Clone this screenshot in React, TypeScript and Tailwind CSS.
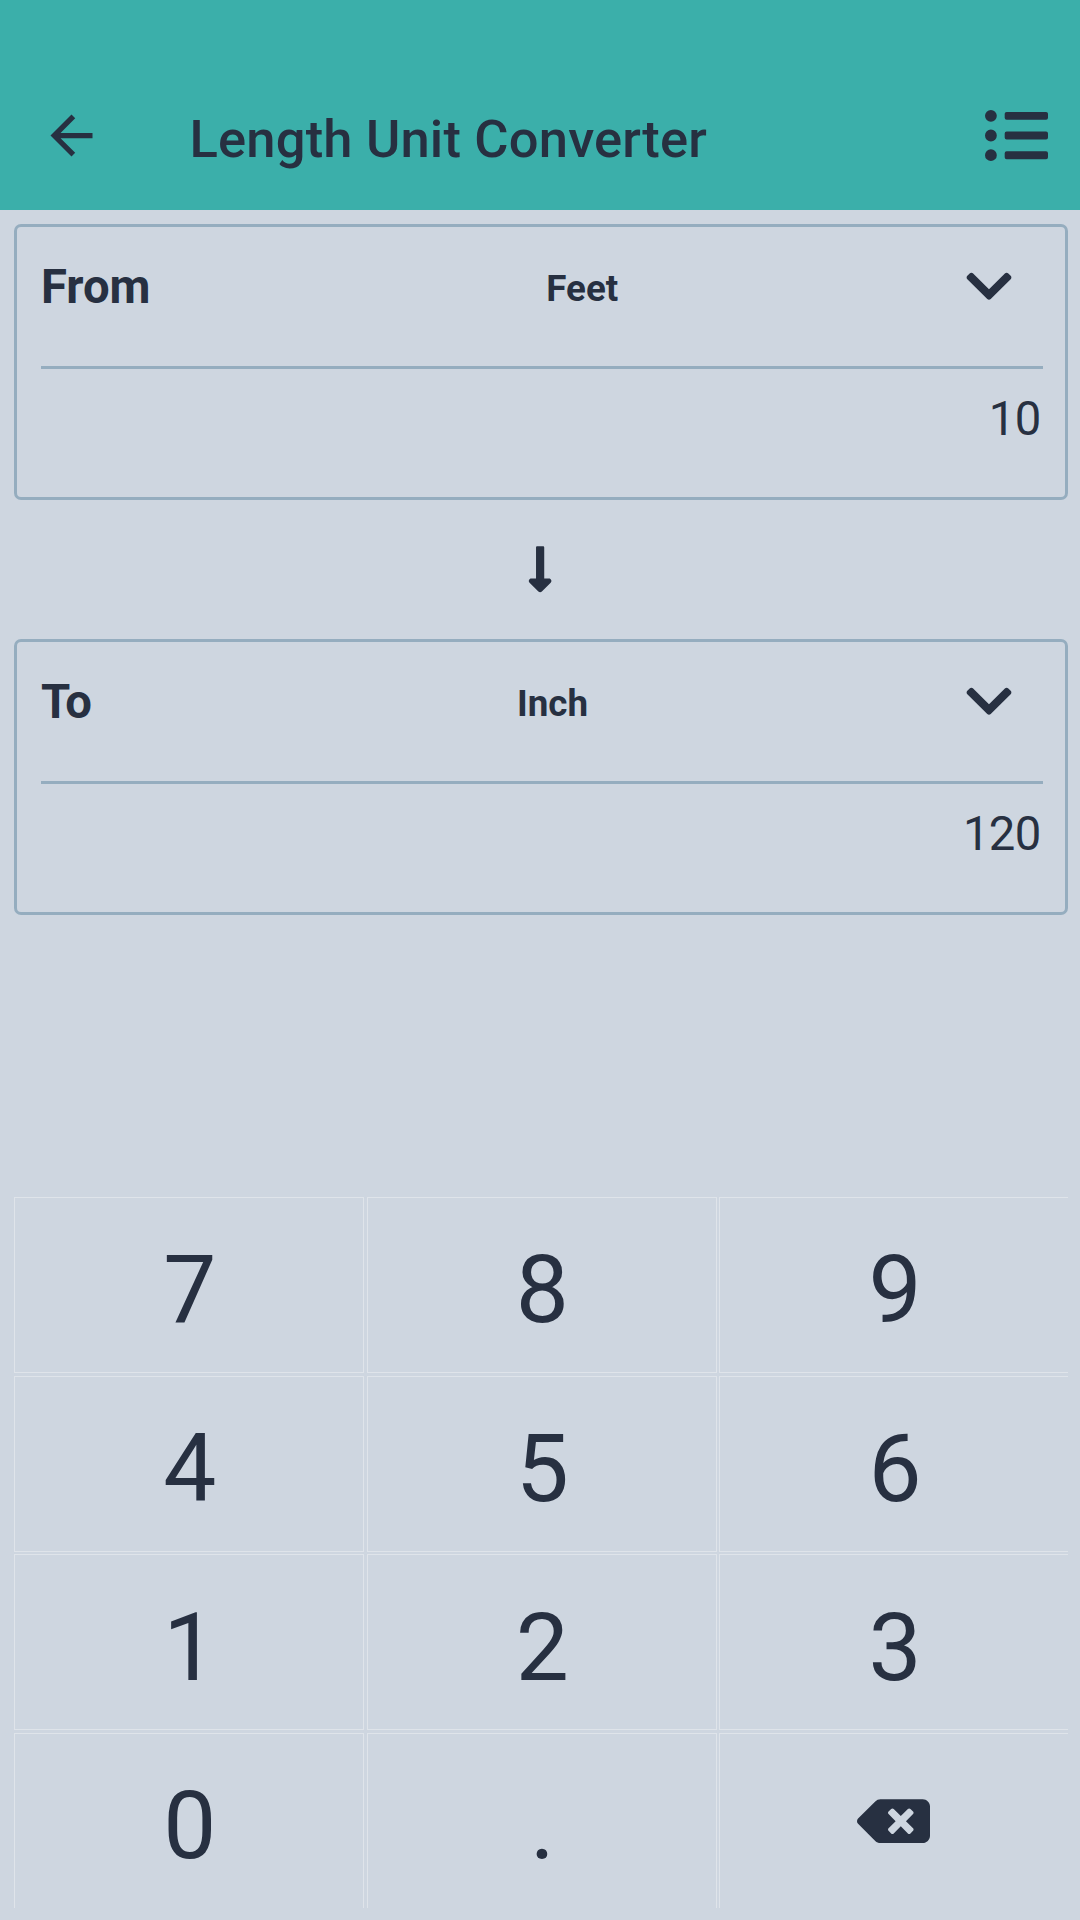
import React from "react";
import { FaBackspace, FaChevronDown, FaListUl, FaLongArrowAltDown } from "react-icons/fa";
import { MdArrowBack } from "react-icons/md";

function UnitCard({ label, unit, value, labelClass }: { label: string; unit: string; value: string; labelClass: string }) {
  return (
    <section className="mr-3 ml-3.5 h-[276px] rounded-[7px] border-3 border-[#95adbf] pr-[22px] pl-6">
      <div className="flex h-[139px] items-center pb-[20px]">
        <span className={labelClass}>{label}</span>
        <span className="flex-1 pt-[5px] pl-[72px] text-center text-[36.75px] leading-[44px] font-bold">{unit}</span>
        <button className="mr-[31px] ml-[24px] flex" aria-label="Choose unit">
          <FaChevronDown className="h-[52.5px] w-[46px]" />
        </button>
      </div>
      <div className="h-[3px] bg-[#95adbf]" />
      <div className="pt-[22px] pr-[2.5px] text-right text-[47.25px] leading-[56px] tracking-[-0.7px]">{value}</div>
    </section>
  );
}

const KEYS = ["7", "8", "9", "4", "5", "6", "1", "2", "3", "0", ".", "back"];

export default function App() {
  return (
    <main className="flex h-[1920px] w-[1080px] flex-col overflow-hidden bg-[#ced6e0] font-['Roboto',sans-serif] text-[#273041]">
      <header className="flex h-[210px] items-center bg-[#3bafaa] pt-[60px] pr-8 pl-[39.5px]">
        <MdArrowBack className="h-[63px] w-[63px]" />
        <h1 className="ml-[87px] flex-1 pt-[7px] text-[52.5px] leading-[62px] font-medium tracking-[0.18px] whitespace-nowrap">
          Length Unit Converter
        </h1>
        <FaListUl className="h-[63px] w-[63px]" />
      </header>
      <div className="h-3.5" />
      <UnitCard label="From" unit="Feet" value="10" labelClass="text-[47.25px] leading-[56px] font-bold" />
      <div className="flex h-[139px] items-center justify-center">
        <FaLongArrowAltDown className="h-[52.5px] w-[26.25px]" />
      </div>
      <UnitCard
        label="To"
        unit="Inch"
        value="120"
        labelClass="text-[47.25px] leading-[56px] font-bold tracking-[-1px]"
      />
      <div className="mt-auto mr-3 mb-3 ml-3.5 h-[711px] overflow-hidden">
        <div className="grid w-[1056px] grid-cols-[350px_350px_350px] grid-rows-[176px_176px_176px_176px] gap-x-[2.6px] gap-y-[2.66px]">
          {KEYS.map((key) => (
            <button
              key={key}
              className="flex items-center justify-center border border-[#dfe4ea] pt-[11px] pl-[1.5px] text-[94.5px] leading-none"
            >
              {key === "back" ? <FaBackspace className="mr-[2.5px] mb-[10px] h-[58.4px] w-[73px]" /> : key}
            </button>
          ))}
        </div>
      </div>
    </main>
  );
}
